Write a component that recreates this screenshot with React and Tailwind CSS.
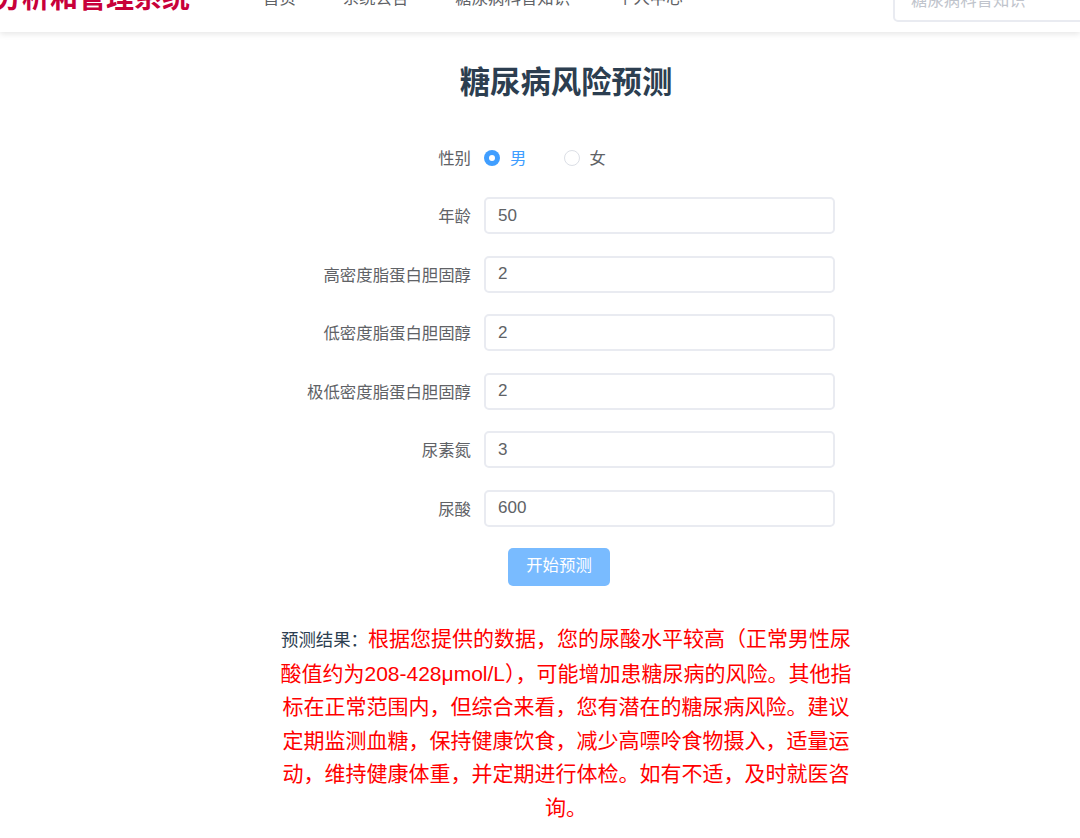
import React from 'react';

const fields = [
  { label: '年龄', value: '50' },
  { label: '高密度脂蛋白胆固醇', value: '2' },
  { label: '低密度脂蛋白胆固醇', value: '2' },
  { label: '极低密度脂蛋白胆固醇', value: '2' },
  { label: '尿素氮', value: '3' },
  { label: '尿酸', value: '600' },
];

const navItems = ['首页', '系统公告', '糖尿病科普知识', '个人中心'];

// full-width punctuation written as escapes
const resultLabel = '预测结果\uFF1A';
const resultText =
  '根据您提供的数据\uFF0C您的尿酸水平较高\uFF08正常男性尿酸值约为208-428μmol/L\uFF09\uFF0C可能增加患糖尿病的风险。其他指标在正常范围内\uFF0C但综合来看\uFF0C您有潜在的糖尿病风险。建议定期监测血糖\uFF0C保持健康饮食\uFF0C减少高嘌呤食物摄入\uFF0C适量运动\uFF0C维持健康体重\uFF0C并定期进行体检。如有不适\uFF0C及时就医咨询。';

const App = () => {
  return (
    <div className="h-[838px] overflow-hidden bg-white font-['Liberation_Sans','Noto_Sans_CJK_SC',sans-serif]">
      <header className="h-8 overflow-hidden shadow-[0_2px_6px_rgba(0,0,0,0.1)] relative">
        <div className="flex items-start h-[60px] -mt-[28px]">
          <div className="w-[263px] shrink-0 -ml-[6px] text-[28px] leading-[36px] mt-[9px] font-bold text-[#c8003a] whitespace-nowrap">分析和管理系统</div>
          <nav className="flex gap-[47px] text-[16.4px] leading-[24px] mt-[14px] text-[#606266] ml-[6px] whitespace-nowrap">
            {navItems.map((item) => (
              <span key={item}>{item}</span>
            ))}
          </nav>
          <div className="ml-auto w-[200px] -mr-[13px] h-[44px] mt-[6px] border-2 border-[#e9ebf1] rounded-[5px] px-4 flex items-center text-[16.4px] text-[#c0c4cc] whitespace-nowrap">
            糖尿病科普知识
          </div>
        </div>
      </header>

      <main className="flex flex-col items-center pl-[52px]">
        <h1 className="mt-[30px] h-10 leading-10 text-[30.4px] font-bold text-[#2c3e50]">糖尿病风险预测</h1>

        <div className="mt-[45px] w-[530px] flex flex-col ml-[8px]">
          <div className="flex items-center h-[22px]">
            <label className="w-[166px] text-right text-[16.4px] pt-[1px] text-[#606266]">性别</label>
            <div className="ml-[13px] flex items-center text-[16.4px] text-[#606266]">
              <span className="w-4 h-4 rounded-full bg-[#409eff] flex items-center justify-center">
                <span className="w-[6px] h-[6px] rounded-full bg-white" />
              </span>
              <span className="ml-[10px] pt-[1px] text-[#409eff]">男</span>
              <span className="ml-[38px] w-4 h-4 rounded-full border border-[#dcdfe6] bg-white" />
              <span className="ml-[9px] pt-[1px]">女</span>
            </div>
          </div>

          <div className="mt-[28px] flex flex-col gap-[21.5px]">
            {fields.map((f) => (
              <div key={f.label} className="flex items-center h-[37px]">
                <label className="w-[166px] text-right text-[16.4px] pt-[2px] text-[#606266] whitespace-nowrap">{f.label}</label>
                <input
                  readOnly
                  value={f.value}
                  className="ml-[13px] w-[351px] h-[37px] border-2 border-[#e9ebf1] rounded-[5px] px-[12px] text-[17px] text-[#606266] outline-none"
                />
              </div>
            ))}
          </div>
        </div>

        <button className="mt-[21px] -ml-[14px] w-[102px] h-[38px] bg-[#79bbff] rounded-[5px] text-white text-[16.4px] pb-[2px]">开始预测</button>

        <div className="mt-[36px] w-[586px] text-center leading-[33.4px] text-[21px] text-[#ff0000]">
          <span className="text-[17.4px] text-[#2c3e50]">{resultLabel}</span>
          {resultText}
        </div>
      </main>
    </div>
  );
};

export default App;
